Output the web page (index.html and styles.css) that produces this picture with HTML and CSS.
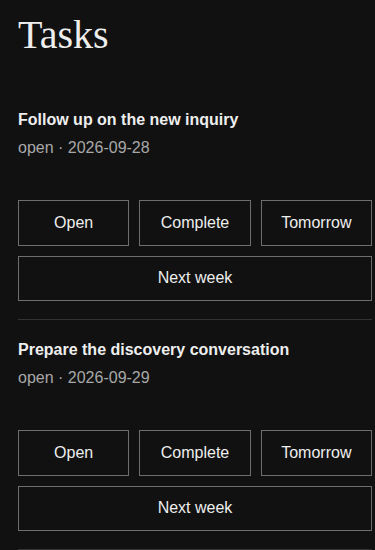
FILE: index.html
```html
<!DOCTYPE html>
<html>
<head>
<meta charset="utf-8">
<link rel="stylesheet" href="styles.css">
</head>
<body>
<main class="page">
  <h1 class="heading">Tasks</h1>
  <section class="task">
    <div class="task-title">Follow up on the new inquiry</div>
    <div class="task-meta">open · 2026-09-28</div>
    <div class="actions">
      <button class="btn">Open</button>
      <button class="btn">Complete</button>
      <button class="btn">Tomorrow</button>
      <button class="btn btn-wide">Next week</button>
    </div>
  </section>
  <section class="task">
    <div class="task-title">Prepare the discovery conversation</div>
    <div class="task-meta">open · 2026-09-29</div>
    <div class="actions">
      <button class="btn">Open</button>
      <button class="btn">Complete</button>
      <button class="btn">Tomorrow</button>
      <button class="btn btn-wide">Next week</button>
    </div>
  </section>
</main>
</body>
</html>
```

FILE: styles.css
```css
html, body {
  margin: 0;
  padding: 0;
  background: #111111;
}
body {
  font-family: "Liberation Sans", Arial, sans-serif;
  color: #eeeeee;
}
.page {
  padding: 12px 3px 0 18px;
}
.heading {
  margin: 0 0 32px 0;
  font-family: "Liberation Serif", "Times New Roman", serif;
  font-weight: normal;
  font-size: 40px;
  line-height: 46px;
  color: #eeeeee;
}
.task {
  padding: 20px 0 18px;
  border-bottom: 1px solid #333333;
}
.task-title {
  font-size: 16px;
  font-weight: bold;
  line-height: 20px;
  color: #eeeeee;
}
.task-meta {
  margin-top: 8px;
  font-size: 16px;
  line-height: 20px;
  color: #a8a8a8;
}
.actions {
  margin-top: 42px;
  display: grid;
  grid-template-columns: 1fr 1fr 1fr;
  gap: 10px;
}
.btn {
  height: 45.5px;
  margin: 0;
  padding: 0;
  background: #111111;
  border: 1px solid #6e6e6e;
  border-radius: 0;
  color: #eeeeee;
  font-family: "Liberation Sans", Arial, sans-serif;
  font-size: 16px;
}
.btn-wide {
  grid-column: 1 / -1;
}
```
